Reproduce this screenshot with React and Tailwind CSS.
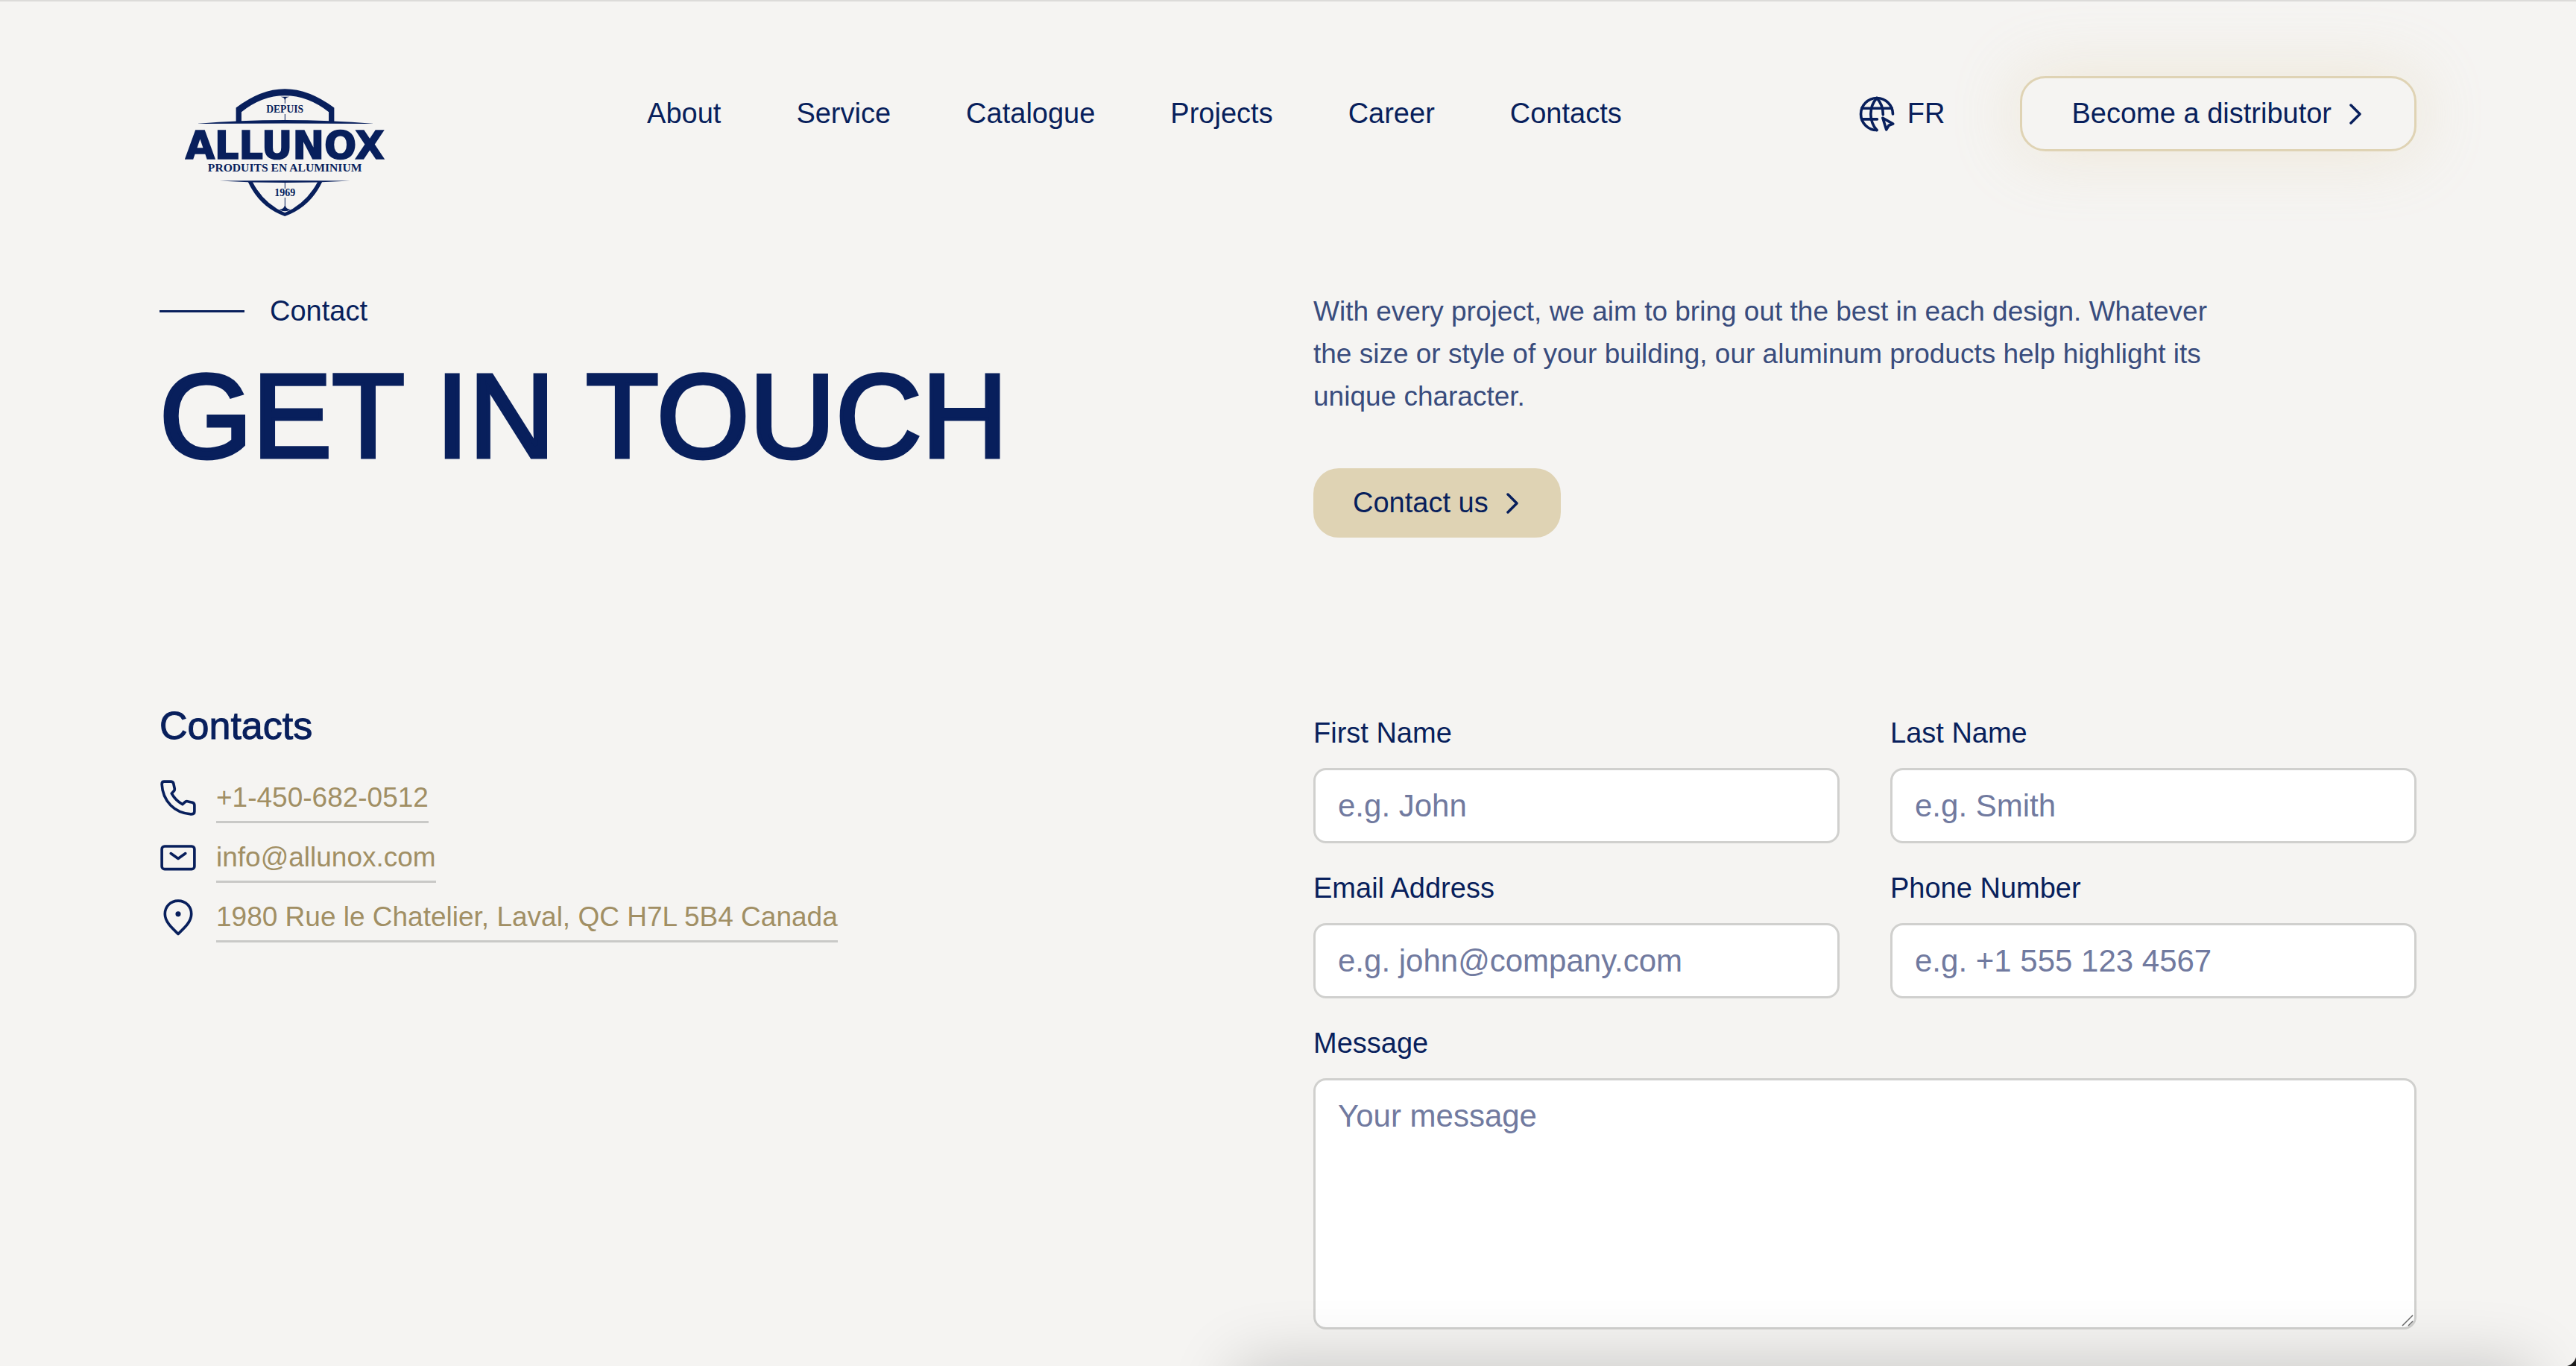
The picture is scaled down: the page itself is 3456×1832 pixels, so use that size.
import { useId } from 'react';

const NAV_LINKS = ['About', 'Service', 'Catalogue', 'Projects', 'Career', 'Contacts'];

const CONTACTS = [
  { icon: PhoneIcon, label: '+1-450-682-0512', href: 'tel:+14506820512' },
  { icon: MailIcon, label: 'info@allunox.com', href: 'mailto:info@allunox.com' },
  { icon: PinIcon, label: '1980 Rue le Chatelier, Laval, QC H7L 5B4 Canada', href: '#map' },
];

const FIELDS = [
  { label: 'First Name', placeholder: 'e.g. John', type: 'text' },
  { label: 'Last Name', placeholder: 'e.g. Smith', type: 'text' },
  { label: 'Email Address', placeholder: 'e.g. john@company.com', type: 'email' },
  { label: 'Phone Number', placeholder: 'e.g. +1 555 123 4567', type: 'tel' },
];

function Logo() {
  return (
    <svg viewBox="144 110 808 520" className="w-[269px] h-[173px]" fill="#081f5c" role="img" aria-label="Allunox">
      {/* Shield top */}
      <path d="M350 250V190Q450 114 547 114T746 190V250H724V207Q640 141 547 141T372 207V250Z" />
      <path d="M190 254Q547 224 908 254Q547 252 190 254Z" />
      <path d="M530 145H565Q549 148 549 158V172H546V158Q546 148 530 145ZM546 215H549V242H546Z" />
      {/* Shield bottom */}
      <path d="M284 484Q547 482 810 484Q547 500 284 484Z" />
      <path d="M398 487H416Q460 575 547 613Q634 575 680 487H698Q650 590 547 627Q444 590 398 487Z" />
      <path d="M546 492H549V516H546ZM546 552H549V584Q552 598 570 600Q547 614 524 600Q543 598 546 584Z" />
      <text x="547" y="396" textAnchor="middle" fontFamily="'DejaVu Sans', sans-serif" fontWeight="700" fontSize="153" stroke="#081f5c" strokeWidth="5">ALLUNOX</text>
      <g fontFamily="'Liberation Serif', serif" fontWeight="700" textAnchor="middle">
        <text x="547" y="208" fontSize="41">DEPUIS</text>
        <text x="547" y="448" fontSize="47">PRODUITS EN ALUMINIUM</text>
        <text x="547" y="546" fontSize="42">1969</text>
      </g>
    </svg>
  );
}

function GlobeIcon() {
  return (
    <svg viewBox="0 0 24 24" className="size-[50px]" fill="none" stroke="currentColor" strokeWidth="1.75" strokeLinecap="round" strokeLinejoin="round" aria-hidden="true">
      <path d="M22.300 12A10.300 10.300 0 1 0 12 22.300" />
      <path d="M2.300 8.300H21.700M2.300 15.300H12.200" />
      <path d="M12 22.300C9.400 19.500 8.100 16 8.100 12S9.400 4.500 12 1.700M12 1.700C14.600 4.500 16 8 16 12.400" />
      <path d="M15.800 14.500L22.400 18.300L19.700 19.300L18.100 22Z" />
    </svg>
  );
}

function PhoneIcon() {
  return (
    <svg viewBox="0 0 24 24" className="size-[50px]" fill="none" stroke="currentColor" strokeWidth="1.75" strokeLinejoin="round" aria-hidden="true">
      <path d="M3 1.500H7.200Q8.600 1.500 9 2.700L9.700 6Q9.900 7 9.200 7.700L7.800 9.200Q10.300 13.700 14.800 16.200L16.300 14.800Q17 14.100 18 14.300L21.200 15Q22.500 15.400 22.500 16.800V20.800Q22.500 22.500 20.800 22.500Q12.500 22.200 7.200 16.800T1.500 3.200Q1.500 1.500 3 1.500Z" />
    </svg>
  );
}

function MailIcon() {
  return (
    <svg viewBox="0 0 24 24" className="size-[50px]" fill="none" stroke="currentColor" strokeWidth="1.75" strokeLinecap="round" strokeLinejoin="round" aria-hidden="true">
      <rect x="1.500" y="4.800" width="21" height="14.700" rx="1.800" />
      <path d="M7.300 9.400L12 12.700L16.700 9.400" />
    </svg>
  );
}

function PinIcon() {
  return (
    <svg viewBox="0 0 24 24" className="size-[50px]" fill="none" stroke="currentColor" strokeWidth="1.75" strokeLinejoin="round" aria-hidden="true">
      <path d="M12 1.500C7 1.500 3.500 5.200 3.500 10C3.500 15 8 19 12 22.800C16 19 20.500 15 20.500 10C20.500 5.200 17 1.500 12 1.500Z" />
      <circle cx="12" cy="10" r="1.700" fill="currentColor" stroke="none" />
    </svg>
  );
}

function Chevron() {
  return (
    <svg viewBox="0 0 20 30" className="w-5 h-[30px]" fill="none" stroke="currentColor" strokeWidth="3.500" strokeLinecap="round" strokeLinejoin="round" aria-hidden="true">
      <path d="M2 3L14 15L2 27" />
    </svg>
  );
}

function Header() {
  return (
    <header className="flex items-start justify-between pt-[100px]">
      <a href="#home" className="px-[34px] pt-4">
        <Logo />
      </a>
      <nav className="flex h-[101px] items-center gap-[101px]">
        {NAV_LINKS.map((link) => (
          <a key={link} href={`#${link.toLowerCase()}`}>{link}</a>
        ))}
      </nav>
      <div className="flex items-center gap-[100px]">
        <a href="#fr" className="flex items-center gap-4">
          <GlobeIcon />
          FR
        </a>
        <button
          type="button"
          className="flex h-[101px] items-center gap-6 rounded-[34px] border-[3px] border-[#dfd3b4] bg-[#f5f4f2] px-[67px] shadow-[0_0_90px_rgba(223,200,150,0.3)]"
        >
          Become a distributor
          <Chevron />
        </button>
      </div>
    </header>
  );
}

function Hero() {
  return (
    <section className="grid grid-cols-2 gap-x-[68px] pt-[98px]">
      <div>
        <p className="flex items-center gap-[34px]">
          <span className="h-[3px] w-[114px] bg-[#081f5c]" />
          Contact
        </p>
        <h1 className="mt-7 text-[160px] leading-[168px] [-webkit-text-stroke:5px_currentColor]">GET IN TOUCH</h1>
      </div>
      <div>
        <p className="max-w-[1260px] text-[37px] text-[#394c7d]">
          With every project, we aim to bring out the best in each design. Whatever the size or style of your
          building, our aluminum products help highlight its unique character.
        </p>
        <button type="button" className="mt-[68px] flex h-[93px] items-center gap-6 rounded-[34px] bg-[#dfd3b4] px-[53px]">
          Contact us
          <Chevron />
        </button>
      </div>
    </section>
  );
}

function ContactList() {
  return (
    <div>
      <h2 className="text-[52px] leading-[68px] [-webkit-text-stroke:1px_currentColor]">Contacts</h2>
      <ul className="mt-[34px] flex flex-col gap-[17px]">
        {CONTACTS.map(({ icon: ItemIcon, label, href }) => (
          <li key={label} className="flex items-start gap-[26px]">
            <span className="flex h-[57px] items-center">
              <ItemIcon />
            </span>
            <a href={href} className="border-b-[3px] border-[#c9c9c7] pb-[3px] text-[37px] text-[#a18f64]">{label}</a>
          </li>
        ))}
      </ul>
    </div>
  );
}

function Field({ label, placeholder, type }) {
  const id = useId();
  return (
    <div className="flex flex-col gap-[18px]">
      <label htmlFor={id}>{label}</label>
      <input
        id={id}
        type={type}
        placeholder={placeholder}
        className="h-[101px] w-full rounded-[17px] border-[3px] border-[#d0d0ce] bg-white px-[30px] text-[42px] placeholder:text-[#717a9f]"
      />
    </div>
  );
}

function ContactForm() {
  return (
    <form className="grid grid-cols-2 gap-x-[68px] gap-y-8 pt-4">
      {FIELDS.map((field) => (
        <Field key={field.label} {...field} />
      ))}
      <div className="col-span-2 flex flex-col gap-[18px]">
        <label htmlFor="message">Message</label>
        <div className="relative flex">
          <textarea
            id="message"
            placeholder="Your message"
            className="h-[337px] w-full resize-none rounded-[17px] border-[3px] border-[#d0d0ce] bg-white px-[30px] py-4 text-[42px] leading-[64px] placeholder:text-[#717a9f]"
          />
          {/* Resize grip */}
          <svg viewBox="0 0 16 16" className="pointer-events-none absolute right-1 bottom-1 size-4" stroke="#6b6b6b" strokeWidth="1.500" aria-hidden="true">
            <path d="M1 15L15 1M9 15L15 9" />
          </svg>
        </div>
      </div>
    </form>
  );
}

export default function App() {
  return (
    <div className="min-h-screen overflow-hidden border-t-2 border-[#dcdbd9] bg-[#f5f4f2] px-[214px] font-['Liberation_Sans',sans-serif] text-[38px] leading-[57px] text-[#081f5c]">
      <Header />
      <Hero />
      <section className="grid grid-cols-2 gap-x-[68px] pt-[218px]">
        <ContactList />
        <ContactForm />
      </section>

      <div className="pointer-events-none fixed top-full right-[60px] left-[48%] h-40 shadow-[0_0_90px_rgba(0,0,0,0.2)]" />
      <div className="pointer-events-none fixed right-0 bottom-0 size-4 bg-[radial-gradient(circle_at_0_0,transparent_16px,#1b1b1b_17px)]" />
    </div>
  );
}
